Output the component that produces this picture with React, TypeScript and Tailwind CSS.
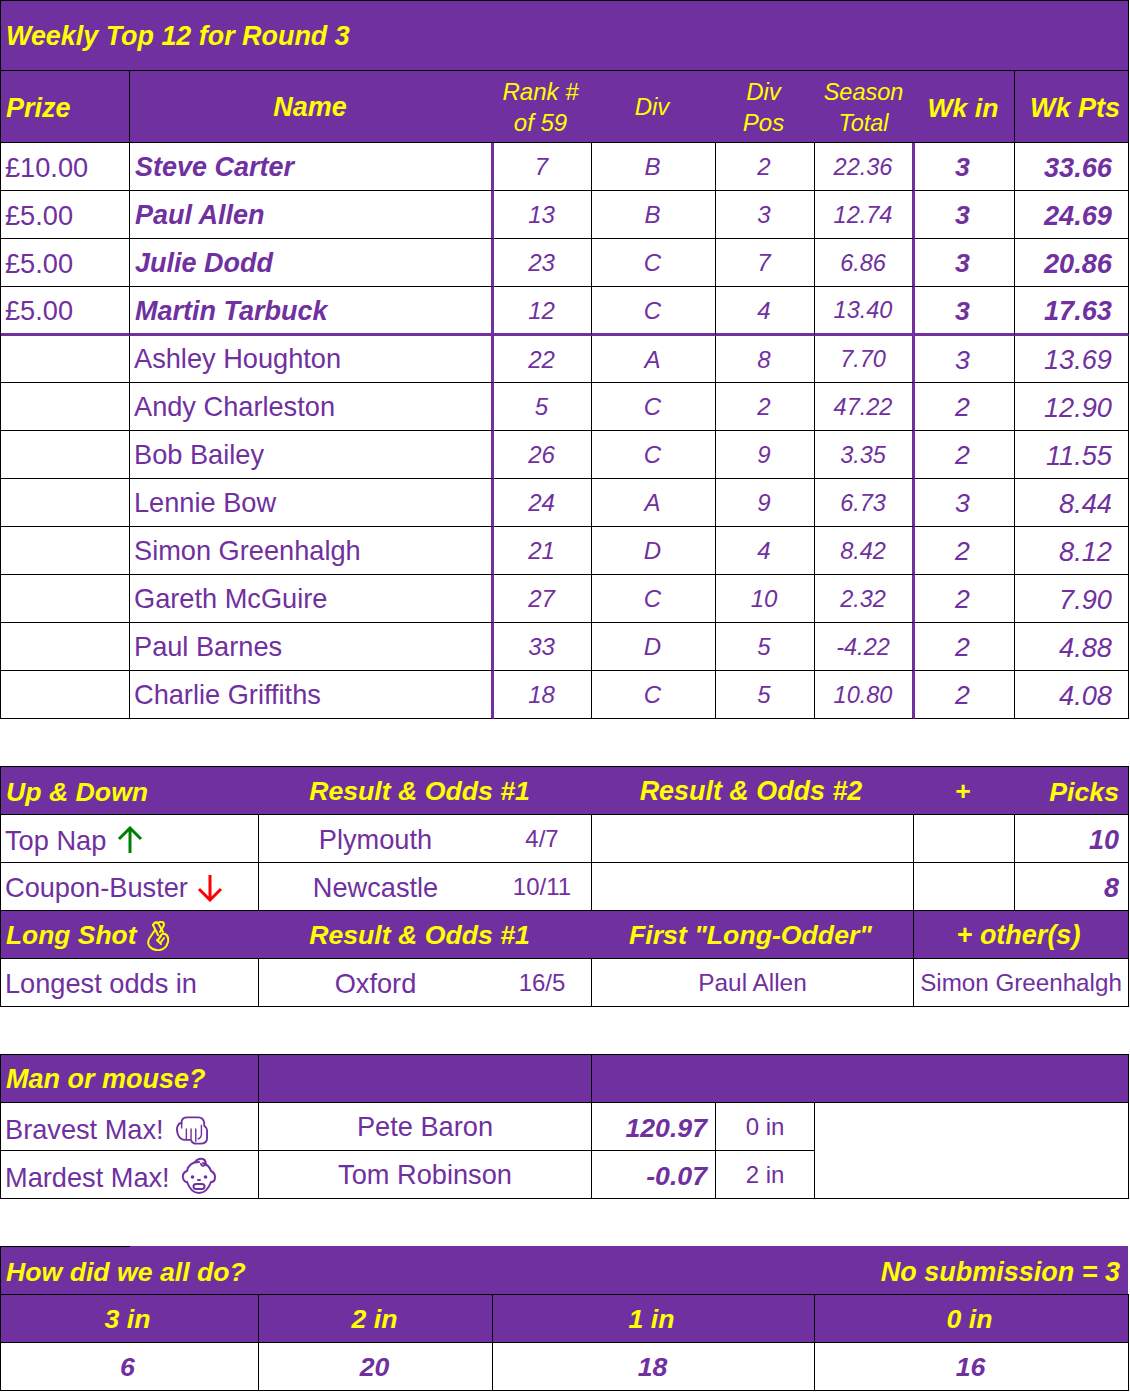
import React from "react";

const B = "border-r border-b border-black";

function Cell({ className = "", children }: { className?: string; children?: React.ReactNode }) {
  return <div className={`flex items-center min-w-0 whitespace-nowrap ${className}`}>{children}</div>;
}

function ArrowUp() {
  return (
    <svg width="26" height="28" viewBox="0 0 26 28" fill="none" stroke="#008000" strokeWidth="3" className="ml-[11px] -mt-[1px]">
      <path d="M13 27V3M2 13L13 2L24 13" />
    </svg>
  );
}
function ArrowDown() {
  return (
    <svg width="26" height="28" viewBox="0 0 26 28" fill="none" stroke="#ff0000" strokeWidth="3" className="ml-[9px] mt-[1px]">
      <path d="M13 1V25M2 15L13 26L24 15" />
    </svg>
  );
}
function Crossed() {
  return (
    <svg width="24" height="30" viewBox="0 0 24 30" fill="none" stroke="#ffff00" strokeWidth="2" strokeLinejoin="round" strokeLinecap="round" className="ml-[10px]">
      <path d="M7 4Q9 0 12 2L17 11" />
      <path d="M7 4L12 14" />
      <path d="M11 2Q18 -1 18 4L14 11" />
      <path d="M9 9L3 18Q1 23 4 26Q8 30 14 29Q20 28 22 21Q23 15 19 13Q17 12 15 14L12 19" />
      <path d="M12 19L15 15M15 21L18 17M11 19L15 23" />
    </svg>
  );
}
function Fist() {
  return (
    <svg width="32" height="31" viewBox="0 0 34 32" fill="none" stroke="#7030a0" strokeWidth="2" strokeLinejoin="round" className="ml-[12px] mt-[2px]">
      <path d="M6 8V6Q7 2 12 2H24Q29 2 30 8V11Q33 13 33 17V24Q33 30 26 30H22Q17 30 16 26H10Q4 26 2 20Q0 14 2 11Q3 8 6 8Z" />
      <path d="M11 14V25M16 14V25M21 14V28M27 10V20Q27 24 23 25M6 8V14" strokeWidth="1.5" />
    </svg>
  );
}
function Baby() {
  return (
    <svg width="36" height="38" viewBox="0 0 36 38" fill="none" stroke="#7030a0" strokeWidth="2" strokeLinecap="round" className="ml-[11px] -mt-[4px]">
      <path d="M18 5Q8 5 6 14Q1 16 2 21Q3 25 6 25Q10 36 18 36Q26 36 30 25Q34 25 34 20Q34 16 30 14Q28 8 22 6" />
      <path d="M14 5Q17 1 22 2Q26 4 24 8Q21 10 20 7" />
      <circle cx="11.5" cy="20" r="1.8" fill="#7030a0" stroke="none" />
      <circle cx="24.5" cy="20" r="1.8" fill="#7030a0" stroke="none" />
      <path d="M17 23H19" />
      <rect x="12.5" y="27" width="11" height="5" rx="2.5" />
    </svg>
  );
}

const HEAD = "bg-[#7030a0] text-[#ffff00]";
const H27 = "text-[26.67px] font-bold italic";
const H27L = "text-[27px] font-bold italic";
const T27 = "text-[27.2px]";
const ROW = "h-[48px]";

type R = [string, string, string, string, string, string, string, string];
const top: R[] = [
  ["£10.00", "Steve Carter", "7", "B", "2", "22.36", "3", "33.66"],
  ["£5.00", "Paul Allen", "13", "B", "3", "12.74", "3", "24.69"],
  ["£5.00", "Julie Dodd", "23", "C", "7", "6.86", "3", "20.86"],
  ["£5.00", "Martin Tarbuck", "12", "C", "4", "13.40", "3", "17.63"],
  ["", "Ashley Houghton", "22", "A", "8", "7.70", "3", "13.69"],
  ["", "Andy Charleston", "5", "C", "2", "47.22", "2", "12.90"],
  ["", "Bob Bailey", "26", "C", "9", "3.35", "2", "11.55"],
  ["", "Lennie Bow", "24", "A", "9", "6.73", "3", "8.44"],
  ["", "Simon Greenhalgh", "21", "D", "4", "8.42", "2", "8.12"],
  ["", "Gareth McGuire", "27", "C", "10", "2.32", "2", "7.90"],
  ["", "Paul Barnes", "33", "D", "5", "-4.22", "2", "4.88"],
  ["", "Charlie Griffiths", "18", "C", "5", "10.80", "2", "4.08"],
];

const MAIN = "grid grid-cols-[129px_364px_98px_124px_99px_100px_100px_114px]";
const SECOND = "grid grid-cols-[258px_333px_322px_101px_114px]";
const THIRD = "grid grid-cols-[258px_333px_124px_99px_314px]";
const FOURTH = "grid grid-cols-[258px_234px_322px_314px]";

function TopRow({ r, i }: { r: R; i: number }) {
  const bold = i < 4;
  const last = i === 3;
  const h = last ? "h-[49px]" : i === 4 ? "h-[47px]" : ROW;
  const b = last ? "border-r border-b-[3px] border-b-[#7030a0] border-r-black" : B;
  const thick = last
    ? "border-r-[3px] border-r-[#7030a0] border-b-[3px] border-b-[#7030a0]"
    : "border-r-[3px] border-r-[#7030a0] border-b border-b-black";
  const mid = `justify-center text-[24px] italic ${b} pt-[1px]`;
  return (
    <>
      <Cell className={`${h} ${b} ${T27} pl-[4px] pt-[2px]`}>{r[0]}</Cell>
      <Cell className={`${h} ${thick} ${bold ? `${H27L} pl-[5px] pt-[2px]` : `${T27} pl-[4px]`}`}>{r[1]}</Cell>
      <Cell className={`${h} ${mid} pr-[2px]`}>{r[2]}</Cell>
      <Cell className={`${h} ${mid} pr-[2px]`}>{r[3]}</Cell>
      <Cell className={`${h} ${mid} pr-[2px]`}>{r[4]}</Cell>
      <Cell className={`${h} justify-center text-[23.5px] italic pt-[2px] ${thick} pr-[1px]`}>{r[5]}</Cell>
      <Cell className={`${h} justify-center pr-[4px] pt-[2px] text-[26.67px] italic ${bold ? "font-bold" : ""} ${b}`}>{r[6]}</Cell>
      <Cell className={`${h} justify-end pr-[16px] pt-[2px] ${T27} italic ${bold ? "font-bold" : ""} ${b}`}>{r[7]}</Cell>
    </>
  );
}

export default function App() {
  return (
    <div className="w-[1130px] h-[1392px] bg-white text-[#7030a0] font-['Liberation_Sans',Arial,sans-serif] leading-none overflow-hidden">
      {/* Weekly top 12 */}
      <div className={`${MAIN} w-[1129px] border-l border-t border-black`}>
        <Cell className={`col-span-8 h-[70px] ${HEAD} ${B} text-[26.9px] font-bold italic pl-[5px] pt-[2px]`}>Weekly Top 12 for Round 3</Cell>
        <Cell className={`h-[72px] ${HEAD} ${B} ${H27L} pl-[5px] pt-[3px]`}>Prize</Cell>
        <Cell className={`h-[72px] ${HEAD} border-b border-black ${H27L} justify-center pr-[4px] pt-[1px]`}>Name</Cell>
        <Cell className={`h-[72px] ${HEAD} border-b border-black text-[24px] italic justify-center text-center leading-[31px] whitespace-normal pr-[5px]`}>
          <span>Rank #<br />of 59</span>
        </Cell>
        <Cell className={`h-[72px] ${HEAD} border-b border-black text-[24px] italic justify-center pr-[4px] pt-[1px]`}>Div</Cell>
        <Cell className={`h-[72px] ${HEAD} border-b border-black text-[24px] italic justify-center text-center leading-[31px] whitespace-normal pr-[4px]`}>
          <span>Div<br />Pos</span>
        </Cell>
        <Cell className={`h-[72px] ${HEAD} border-b border-black text-[23.5px] italic justify-center text-center leading-[31px] whitespace-normal pr-[3px] pt-[2px]`}>
          <span>Season<br />Total</span>
        </Cell>
        <Cell className={`h-[72px] ${HEAD} ${B} ${H27} justify-center pr-[3px] pt-[3px]`}>Wk in</Cell>
        <Cell className={`h-[72px] ${HEAD} ${B} ${H27L} justify-end pr-[8px] pt-[3px]`}>Wk Pts</Cell>
        {top.map((r, i) => (
          <TopRow key={i} r={r} i={i} />
        ))}
      </div>

      {/* Up & Down */}
      <div className={`${SECOND} w-[1129px] border-l border-t border-black mt-[47px]`}>
        <Cell className={`${ROW} ${HEAD} border-b border-black ${H27} pl-[5px] pt-[3px]`}>Up &amp; Down</Cell>
        <Cell className={`${ROW} ${HEAD} border-b border-black ${H27} justify-center pr-[12px] pt-[2px]`}>Result &amp; Odds #1</Cell>
        <Cell className={`${ROW} ${HEAD} border-b border-black text-[26.9px] font-bold italic justify-center pr-[4px] pt-[2px]`}>Result &amp; Odds #2</Cell>
        <Cell className={`${ROW} ${HEAD} border-b border-black ${H27} justify-center pr-[4px] pt-[2px]`}>+</Cell>
        <Cell className={`${ROW} ${HEAD} ${B} ${H27} justify-end pr-[9px] pt-[3px]`}>Picks</Cell>

        <Cell className={`${ROW} ${B} ${T27} pl-[4px] pt-[4px]`}>Top Nap<ArrowUp /></Cell>
        <Cell className={`${ROW} ${B} grid grid-cols-[233px_99px]`}>
          <span className={`text-center ${T27} pt-[2px]`}>Plymouth</span>
          <span className="text-center text-[24px] pl-[1px]">4/7</span>
        </Cell>
        <Cell className={`${ROW} ${B}`} />
        <Cell className={`${ROW} ${B}`} />
        <Cell className={`${ROW} ${B} ${H27L} justify-end pr-[9px] pt-[3px]`}>10</Cell>

        <Cell className={`${ROW} ${B} ${T27} pl-[4px] pt-[2px]`}>Coupon-Buster<ArrowDown /></Cell>
        <Cell className={`${ROW} ${B} grid grid-cols-[233px_99px]`}>
          <span className={`text-center ${T27} pt-[2px]`}>Newcastle</span>
          <span className="text-center text-[24px] pl-[1px]">10/11</span>
        </Cell>
        <Cell className={`${ROW} ${B}`} />
        <Cell className={`${ROW} ${B}`} />
        <Cell className={`${ROW} ${B} ${H27L} justify-end pr-[9px] pt-[3px]`}>8</Cell>

        <Cell className={`${ROW} ${HEAD} border-b border-black text-[26.4px] font-bold italic pl-[5px] pt-[2px]`}>Long Shot<Crossed /></Cell>
        <Cell className={`${ROW} ${HEAD} border-b border-black ${H27} justify-center pr-[12px] pt-[2px]`}>Result &amp; Odds #1</Cell>
        <Cell className={`${ROW} ${HEAD} ${B} ${H27} justify-center pr-[4px] pt-[2px]`}>First "Long-Odder"</Cell>
        <Cell className={`${ROW} ${HEAD} ${B} ${H27L} col-span-2 justify-center pr-[5px] pt-[2px]`}>+ other(s)</Cell>

        <Cell className={`${ROW} ${B} ${T27} pl-[4px] pt-[2px]`}>Longest odds in</Cell>
        <Cell className={`${ROW} ${B} grid grid-cols-[233px_99px]`}>
          <span className={`text-center ${T27} pt-[2px]`}>Oxford</span>
          <span className="text-center text-[24px] pl-[1px]">16/5</span>
        </Cell>
        <Cell className={`${ROW} ${B} justify-center text-[24.4px] pt-[2px]`}>Paul Allen</Cell>
        <Cell className={`${ROW} ${B} col-span-2 justify-center text-[24.2px] pt-[2px]`}>Simon Greenhalgh</Cell>
      </div>

      {/* Man or mouse */}
      <div className={`${THIRD} w-[1129px] border-l border-t border-black mt-[47px]`}>
        <Cell className={`${ROW} ${HEAD} ${B} ${H27L} pl-[5px] pt-[2px]`}>Man or mouse?</Cell>
        <Cell className={`${ROW} ${HEAD} ${B}`} />
        <Cell className={`${ROW} ${HEAD} ${B} col-span-3`} />

        <Cell className={`${ROW} ${B} ${T27} pl-[4px] pt-[6px]`}>Bravest Max!<Fist /></Cell>
        <Cell className={`${ROW} ${B} justify-center ${T27} pt-[1px]`}>Pete Baron</Cell>
        <Cell className={`${ROW} ${B} ${H27} justify-end pr-[8px] pt-[3px]`}>120.97</Cell>
        <Cell className={`${ROW} ${B} justify-center text-[24px]`}>0 in</Cell>
        <Cell className={`row-span-2 ${B}`} />

        <Cell className={`${ROW} ${B} ${T27} pl-[4px] pt-[6px]`}>Mardest Max!<Baby /></Cell>
        <Cell className={`${ROW} ${B} justify-center ${T27} pt-[1px]`}>Tom Robinson</Cell>
        <Cell className={`${ROW} ${B} ${H27} justify-end pr-[8px] pt-[3px]`}>-0.07</Cell>
        <Cell className={`${ROW} ${B} justify-center text-[24px]`}>2 in</Cell>
      </div>

      {/* How did we all do */}
      <div className="w-[1128px] border-l border-black mt-[47px]">
        <div className={`${HEAD} h-[48px]`}>
          <div className="h-px w-[129px] bg-black" />
          <div className="flex items-center justify-between h-[47px] pl-[5px] pr-[8px] pt-[3px]">
            <span className={H27}>How did we all do?</span>
            <span className={H27L}>No submission = 3</span>
          </div>
        </div>
      </div>
      <div className={`${FOURTH} w-[1129px] border-l border-t border-black`}>
        <Cell className={`${ROW} ${HEAD} ${B} ${H27} justify-center pr-[4px] pt-[2px]`}>3 in</Cell>
        <Cell className={`${ROW} ${HEAD} ${B} ${H27} justify-center pr-[2px] pt-[2px]`}>2 in</Cell>
        <Cell className={`${ROW} ${HEAD} ${B} ${H27} justify-center pr-[4px] pt-[2px]`}>1 in</Cell>
        <Cell className={`${ROW} ${HEAD} ${B} ${H27} justify-center pr-[4px] pt-[2px]`}>0 in</Cell>
        <Cell className={`${ROW} ${B} ${H27} justify-center pr-[4px] pt-[2px]`}>6</Cell>
        <Cell className={`${ROW} ${B} ${H27} justify-center pr-[2px] pt-[2px]`}>20</Cell>
        <Cell className={`${ROW} ${B} ${H27} justify-center pr-[2px] pt-[2px]`}>18</Cell>
        <Cell className={`${ROW} ${B} ${H27} justify-center pr-[2px] pt-[2px]`}>16</Cell>
      </div>
    </div>
  );
}
